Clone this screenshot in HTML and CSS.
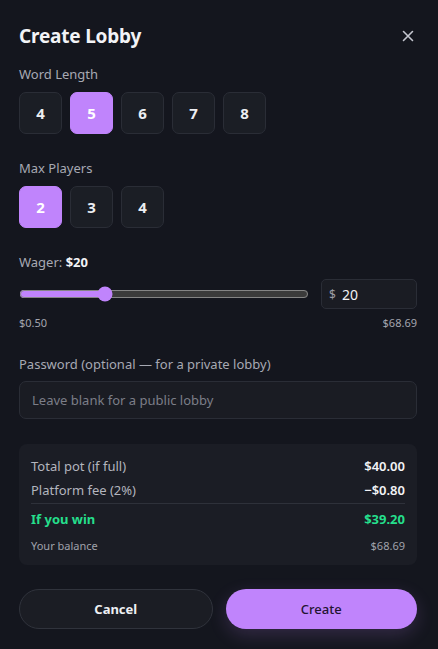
FILE: index.html
```html
<!DOCTYPE html>
<html lang="en">
<head>
<meta charset="utf-8">
<title>Create Lobby</title>
<link rel="stylesheet" href="styles.css">
</head>
<body>
<div class="modal">
  <div class="header">
    <h2 class="title">Create Lobby</h2>
    <button class="close" aria-label="Close">
      <svg width="12" height="12" viewBox="0 0 12 12"><path d="M1.5 1.5 L10.5 10.5 M10.5 1.5 L1.5 10.5" stroke="#c4c6cf" stroke-width="1.6" stroke-linecap="round"/></svg>
    </button>
  </div>

  <div class="field">
    <div class="label">Word Length</div>
    <div class="options">
      <button class="opt">4</button>
      <button class="opt active">5</button>
      <button class="opt">6</button>
      <button class="opt">7</button>
      <button class="opt">8</button>
    </div>
  </div>

  <div class="field">
    <div class="label">Max Players</div>
    <div class="options">
      <button class="opt active">2</button>
      <button class="opt">3</button>
      <button class="opt">4</button>
    </div>
  </div>

  <div class="field wager">
    <div class="label">Wager: <b>$20</b></div>
    <div class="wager-row">
      <input class="range" type="range" min="0.5" max="68.69" step="0.01" value="20">
      <div class="amount"><span class="cur">$</span><span class="val">20</span></div>
    </div>
    <div class="limits"><span>$0.50</span><span>$68.69</span></div>
  </div>

  <div class="field">
    <div class="label">Password (optional — for a private lobby)</div>
    <div class="text-input">Leave blank for a public lobby</div>
  </div>

  <div class="summary">
    <div class="row"><span>Total pot (if full)</span><span class="num">$40.00</span></div>
    <div class="row"><span>Platform fee (2%)</span><span class="num">−$0.80</span></div>
    <div class="divider"></div>
    <div class="row win"><span>If you win</span><span>$39.20</span></div>
    <div class="row small"><span>Your balance</span><span>$68.69</span></div>
  </div>

  <div class="actions">
    <button class="btn cancel">Cancel</button>
    <button class="btn create">Create</button>
  </div>
</div>
</body>
</html>
```

FILE: styles.css
```css
* { box-sizing: border-box; }
html, body { margin: 0; padding: 0; background: #14161e; }
body {
  font-family: "Noto Sans", "Open Sans", sans-serif;
  color: #e8e9ee;
  width: 438px;
  height: 649px;
  overflow: hidden;
}
.modal {
  padding: 22px 21px 0 19px;
  display: flex;
  flex-direction: column;
}
.header {
  display: flex;
  justify-content: space-between;
  align-items: center;
  height: 28px;
}
.title {
  margin: 0;
  font-size: 19px;
  font-weight: 700;
  color: #f2f3f6;
  letter-spacing: -0.2px;
}
.close {
  background: none;
  border: 0;
  padding: 0;
  margin-right: 3px;
  display: flex;
  cursor: pointer;
}
.field { margin-top: 15px; }
.label {
  font-size: 13px;
  color: #a7a9b3;
  line-height: 18px;
  margin-bottom: 9px;
}
.label b { color: #f2f3f6; font-weight: 700; }
.options { display: flex; gap: 8px; }
.opt {
  width: 43px;
  height: 42px;
  border-radius: 7px;
  border: 1px solid #2a2d36;
  background: #1b1e25;
  color: #eceef2;
  font-family: inherit;
  font-size: 15px;
  font-weight: 700;
  padding: 0;
}
.opt.active {
  background: #c084fc;
  border-color: #c084fc;
  color: #ffffff;
}
.field + .field { margin-top: 25px; }
.wager .label { margin-bottom: 8px; }
.wager-row {
  display: flex;
  align-items: center;
  gap: 12px;
}
.range {
  flex: 1;
  margin: 0;
  accent-color: #c084fc;
  color-scheme: dark;
  height: 16px;
}
.amount {
  width: 96px;
  height: 30px;
  border: 1px solid #2a2d36;
  border-radius: 5px;
  background: #1a1c23;
  display: flex;
  align-items: center;
  padding-left: 7px;
  gap: 6px;
}
.cur { font-size: 12px; color: #9a9ca6; }
.val { font-size: 14px; color: #f2f3f6; }
.limits {
  display: flex;
  justify-content: space-between;
  font-size: 11px;
  color: #a3a5ae;
  margin-top: 6px;
}
.text-input {
  height: 38px;
  border: 1px solid #2a2d36;
  border-radius: 7px;
  background: #1a1c23;
  color: #7c7e88;
  font-size: 13px;
  display: flex;
  align-items: center;
  padding-left: 12px;
  margin-top: -1px;
}
.summary {
  margin-top: 25px;
  background: #1b1d25;
  border-radius: 8px;
  padding: 10px 12px 6px 12px;
}
.row {
  display: flex;
  justify-content: space-between;
  font-size: 13px;
  color: #b3b5be;
  line-height: 24px;
}
.row .num { color: #f2f3f6; font-weight: 600; }
.divider { height: 1px; background: #2e313a; margin: 1px 0 2px; }
.row.win { color: #25df8c; font-weight: 700; line-height: 27px; }
.row.small { font-size: 11px; color: #a0a2ab; line-height: 26px; }
.actions {
  display: flex;
  gap: 13px;
  margin-top: 24px;
}
.btn {
  flex: 1;
  height: 40px;
  border-radius: 20px;
  font-family: inherit;
  font-size: 13px;
  padding: 0;
}
.cancel {
  background: #1b1d24;
  border: 1px solid #30333c;
  color: #eef0f3;
  font-weight: 700;
}
.create {
  background: #c084fc;
  border: 0;
  color: #231431;
  font-weight: 500;
  box-shadow: 0 6px 18px rgba(192, 132, 252, 0.18);
}
```
